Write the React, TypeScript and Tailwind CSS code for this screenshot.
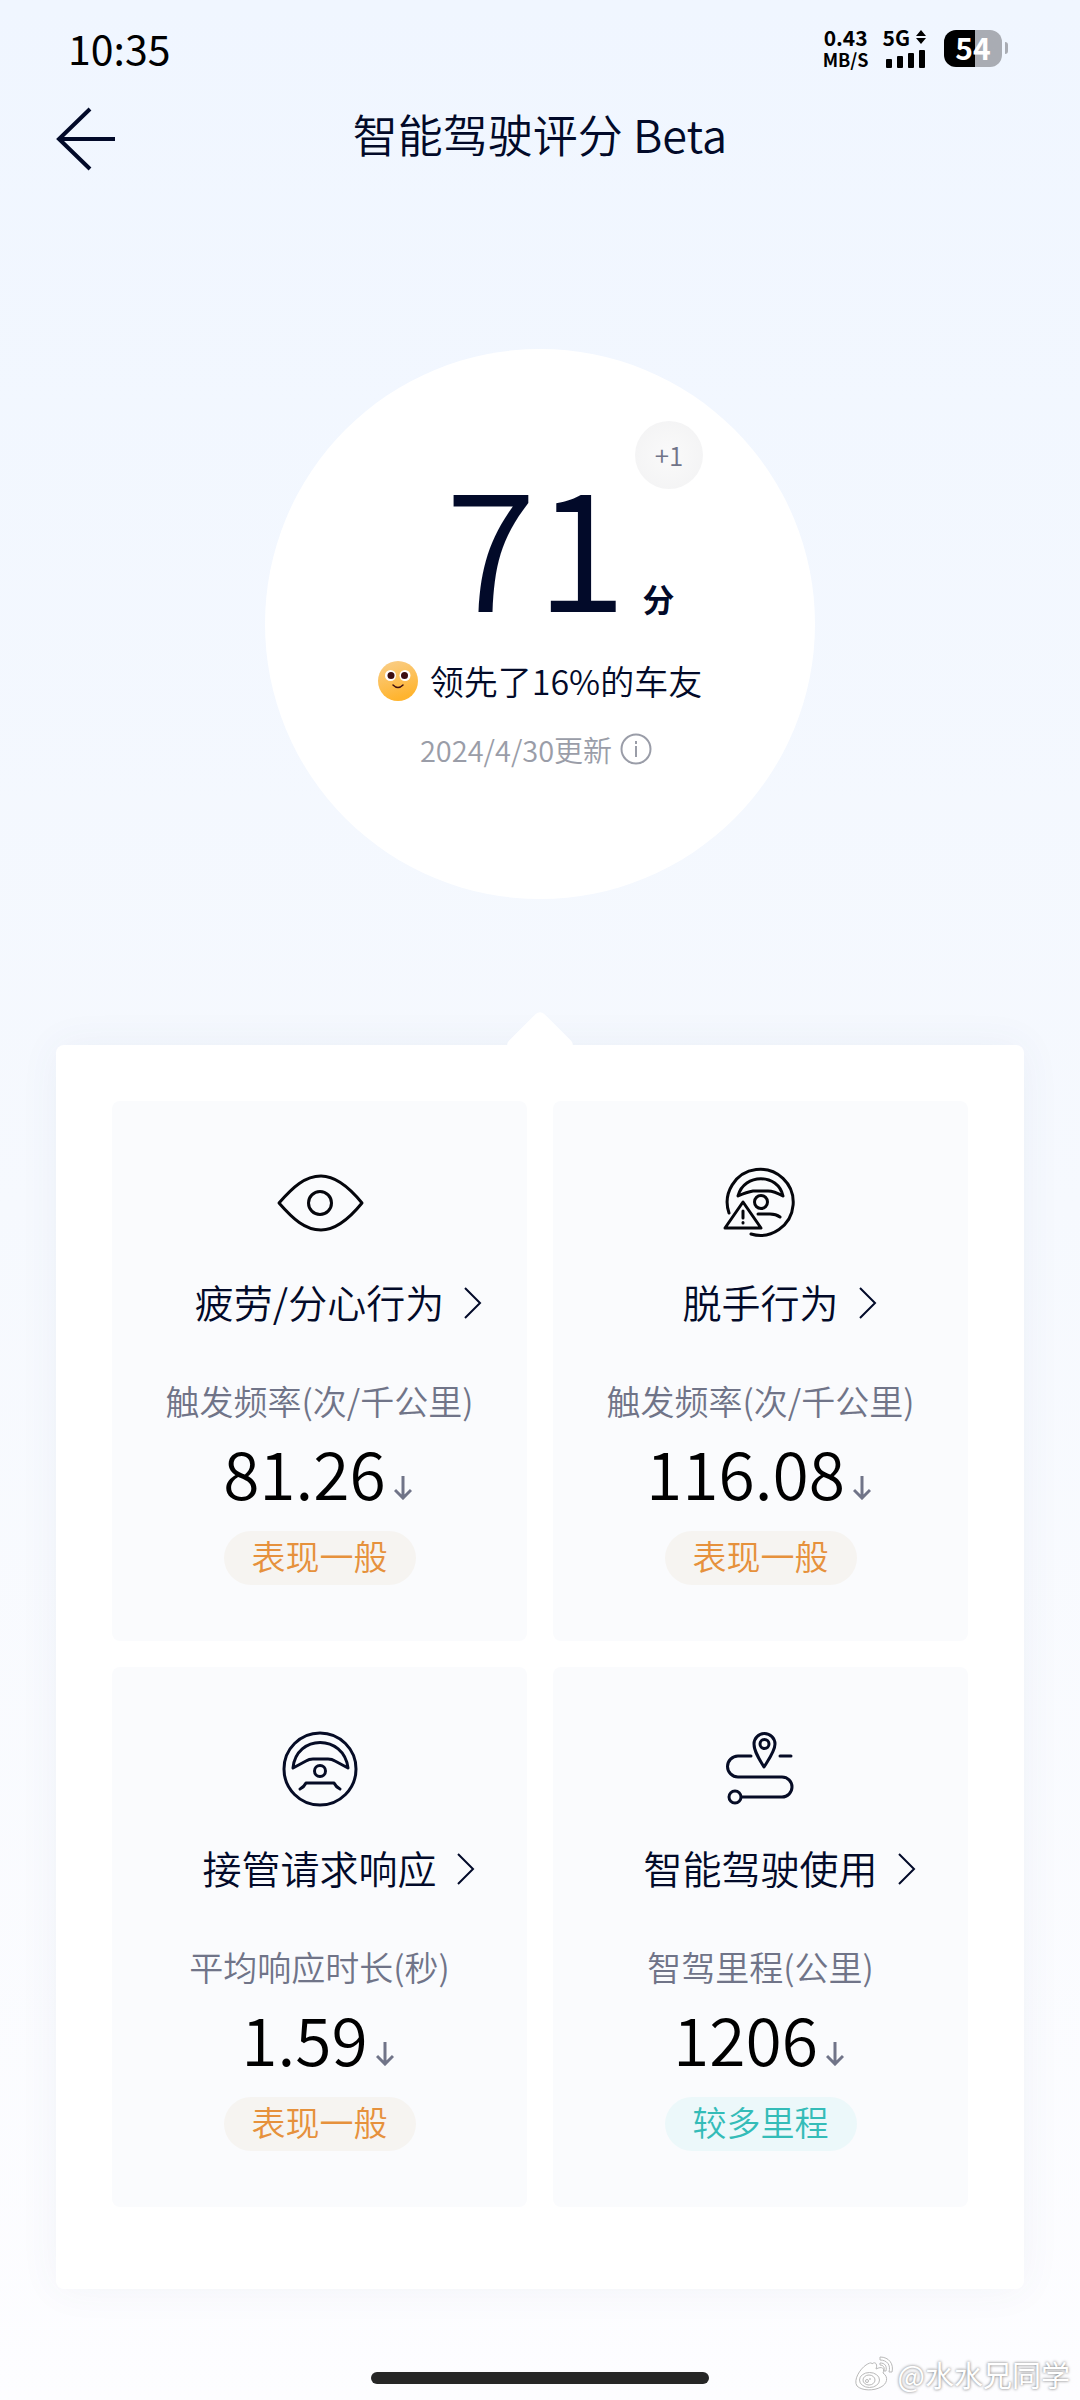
import type { ReactNode } from 'react'

type Metric = {
    title: string
    label: string
    value: string
    badge: string
    good?: boolean
    icon: ReactNode
}

function EyeIcon() {
    return (
        <svg width="88" height="76" viewBox="0 0 88 76" fill="none" stroke="#05060c" strokeWidth="3" strokeLinejoin="round">
            <path d="M3 38 C17 22 29 11 45 11 C60 11 73 22 86 38 C73 54 60 65 45 65 C29 65 17 54 3 38 Z" />
            <circle cx="44" cy="38" r="11.5" />
        </svg>
    )
}

function HandsOffIcon() {
    return (
        <svg width="76" height="76" viewBox="0 0 76 76" fill="none" stroke="#05060c" strokeWidth="3" strokeLinecap="round" strokeLinejoin="round">
            <path d="M6 48 A33 33 0 1 1 28 69" />
            <path d="M15 31 C21 8 55 8 60 31 Q51 26 45 26 H30 Q24 27 15 31 Z" />
            <circle cx="38" cy="37" r="6.5" />
            <path d="M35 49 H47 Q53 49 57 52" />
            <path d="M20 37 L38 63 H2 Z" />
            <path d="M20 46 V53 M20 57.5 V58" />
        </svg>
    )
}

function WheelIcon() {
    return (
        <svg width="76" height="76" viewBox="0 0 76 76" fill="none" stroke="#060c26" strokeWidth="3" strokeLinecap="round" strokeLinejoin="round">
            <circle cx="38" cy="38" r="36" />
            <path d="M11 37 C14 3 62 3 66 37 L53 30 Q50 28 46 28 H31 Q27 28 24 30 Z" />
            <circle cx="38" cy="40" r="5.5" />
            <path d="M18 58 Q22 56 24 52 H52 Q54 56 58 58" />
        </svg>
    )
}

function RouteIcon() {
    return (
        <svg width="76" height="76" viewBox="0 0 76 76" fill="none" stroke="#060c26" strokeWidth="3" strokeLinecap="round" strokeLinejoin="round">
            <path d="M28 25 H15 A10.5 10.5 0 0 0 15 46 H59 A10 10 0 0 1 59 66 H19" />
            <path d="M57 25 H68" />
            <path d="M41 36 C36 28 31 20 31 13 A10.5 10.5 0 0 1 52 13 C52 20 46 28 41 36 Z" />
            <circle cx="41.5" cy="13" r="4.5" />
            <circle cx="12" cy="66" r="6" />
        </svg>
    )
}

function SmileIcon() {
    return (
        <svg width="40" height="40" viewBox="0 0 40 40">
            <defs>
                <linearGradient id="face" x1="0" y1="0" x2="0.3" y2="1">
                    <stop offset="0" stopColor="#f9cf8c" />
                    <stop offset="1" stopColor="#ffb42e" />
                </linearGradient>
            </defs>
            <circle cx="20" cy="20" r="20" fill="url(#face)" />
            <circle cx="12.5" cy="14.5" r="5.5" fill="#fff" />
            <circle cx="27" cy="14.5" r="5.5" fill="#fff" />
            <circle cx="13" cy="14.5" r="3.5" fill="#3d0d10" />
            <circle cx="26.5" cy="14.5" r="3.5" fill="#3d0d10" />
            <path d="M15 24 Q20 29 25 24" fill="none" stroke="#3d0d10" strokeWidth="1.5" strokeLinecap="round" />
        </svg>
    )
}

function WeiboIcon() {
    return (
        <svg width="40" height="36" viewBox="0 0 40 36" fill="#fff" stroke="#b9b9b9" strokeWidth="1">
            <path d="M18 8 C21 5 24 8 22 13 C28 10 31 12 29 17 C35 21 33 28 27 31 C20 35 8 35 3 30 C-1 24 6 13 12 9 C15 7 18 6 18 8 Z" />
            <ellipse cx="15.5" cy="24" rx="10" ry="7.5" />
            <ellipse cx="15" cy="24" rx="6" ry="5" />
            <circle cx="13" cy="25" r="1.5" />
            <circle cx="16" cy="23" r="0.5" />
            <path d="M26 7 C31 7 33 10 32 15 L30 15 C31 11 29 9 26 9 Z" />
            <path d="M26 1 C35 1 40 8 38 16 L35 16 C37 9 33 4 26 4 Z" />
        </svg>
    )
}

const metrics: Metric[] = [
    { title: '疲劳/分心行为', label: '触发频率(次/千公里)', value: '81.26', badge: '表现一般', icon: <EyeIcon /> },
    { title: '脱手行为', label: '触发频率(次/千公里)', value: '116.08', badge: '表现一般', icon: <HandsOffIcon /> },
    { title: '接管请求响应', label: '平均响应时长(秒)', value: '1.59', badge: '表现一般', icon: <WheelIcon /> },
    { title: '智能驾驶使用', label: '智驾里程(公里)', value: '1206', badge: '较多里程', good: true, icon: <RouteIcon /> },
]

function StatusBar() {
    return (
        <div className="flex h-24 items-center justify-between pl-[68px] pr-[72px] text-black">
            <span className="pb-0.5 text-[41px] leading-[48px] font-normal">10:35</span>
            <div className="flex items-center gap-3.5">
                <div className="text-center font-bold">
                    <div className="text-[21px] leading-[22px]">0.43</div>
                    <div className="text-[18px] leading-[22px]">MB/S</div>
                </div>
                <div className="mr-1 flex flex-col gap-1">
                    <div className="flex items-center gap-1.5 text-[21px] leading-[18px] font-bold">
                        5G
                        <svg width="10" height="14" viewBox="0 0 10 14">
                            <path d="M5 0 L10 6 H0 Z M0 8 H10 L5 14 Z" />
                        </svg>
                    </div>
                    <svg width="42" height="18" viewBox="0 0 42 18">
                        <rect x="3" y="9" width="6" height="9" rx="1" />
                        <rect x="14" y="6" width="6" height="12" rx="1" />
                        <rect x="25" y="3" width="6" height="15" rx="1" />
                        <rect x="36" y="0" width="6" height="18" rx="1" />
                    </svg>
                </div>
                <div className="flex items-center gap-[3px]">
                    <div className="flex h-[37px] w-[58px] items-center justify-center rounded-xl bg-linear-to-r from-black from-53% to-[#a9acb3] to-53% pb-0.5 text-[30px] leading-none font-bold text-white">
                        54
                    </div>
                    <div className="h-3 w-[3px] rounded-r bg-[#a9acb3]" />
                </div>
            </div>
        </div>
    )
}

function ScoreCircle() {
    return (
        <section className="relative mx-auto mt-[173px] flex size-[550px] flex-col items-center rounded-full bg-white">
            <span className="absolute top-[72px] right-28 flex size-[68px] items-center justify-center rounded-full bg-radial from-[#fafafa] to-[#f2f2f3] pb-0.5 text-[26px] text-[#707488]">
                +1
            </span>
            <div className="mt-[102px] flex items-baseline gap-4 pl-10">
                <span className="text-[165px] leading-[180px]">71</span>
                <span className="text-[32px] font-bold">分</span>
            </div>
            <div className="mt-[26px] flex items-center gap-3 text-[34px] leading-[48px]">
                <SmileIcon />
                领先了16%的车友
            </div>
            <div className="mt-5 flex items-center gap-2 pr-2 text-[29px] leading-[48px] text-[#9a9da8]">
                2024/4/30更新
                <button aria-label="说明">
                    <svg width="32" height="32" viewBox="0 0 32 32" fill="none" stroke="#9a9da8" strokeWidth="2">
                        <circle cx="16" cy="16" r="14.5" />
                        <path d="M16 13 V24 M16 8 V11" />
                    </svg>
                </button>
            </div>
        </section>
    )
}

function MetricCard({ title, label, value, badge, good, icon }: Metric) {
    return (
        <div className="flex flex-col items-center rounded-lg bg-[#fafbfd] pt-16 pb-14">
            {icon}
            <button className="mt-[34px] flex items-center gap-5 pl-[38px] text-[39px] leading-[52px]">
                {title}
                <svg className="mt-1" width="18" height="32" viewBox="0 0 18 32" fill="none" stroke="currentColor" strokeWidth="2">
                    <path d="M1 1 L16 16 L1 31" />
                </svg>
            </button>
            <div className="mt-[50px] text-[34px] leading-[48px] text-[#707488]">{label}</div>
            <div className="mt-2.5 flex items-baseline gap-2 pr-1 text-[66px] leading-[72px] text-black">
                {value}
                <svg width="18" height="24" viewBox="0 0 18 24" fill="none" stroke="#707488" strokeWidth="3">
                    <path d="M9 0 V22 M1 14 L9 22 L17 14" />
                </svg>
            </div>
            <span
                className={
                    good
                        ? 'mt-6 rounded-full bg-[#ecf8fa] px-7 pb-1 text-[34px] leading-[50px] text-[#34bcb8]'
                        : 'mt-6 rounded-full bg-[#f6f4f1] px-7 pb-1 text-[34px] leading-[50px] text-[#e6913c]'
                }
            >
                {badge}
            </span>
        </div>
    )
}

export default function App() {
    return (
        <div className="relative flex min-h-screen flex-col bg-linear-to-b from-[#f0f6ff] via-[#f6f9fe] to-[#fdfdff] font-['Noto_Sans_CJK_SC',sans-serif] font-[350] text-[#020a29]">
            <StatusBar />
            <header className="grid h-20 grid-cols-[1fr_auto_1fr] items-center px-14">
                <button aria-label="返回" className="mt-1.5 justify-self-start">
                    <svg width="60" height="64" viewBox="0 0 60 64" fill="none" stroke="currentColor" strokeWidth="4">
                        <path d="M34 2 L3 32 L34 62 M3 32 H59" />
                    </svg>
                </button>
                <h1 className="pb-1 text-[45px] leading-[64px]">智能驾驶评分 Beta</h1>
            </header>

            <ScoreCircle />

            <main className="relative mx-14 mt-[146px] rounded-lg bg-white px-14 pt-14 pb-[82px] shadow-[0_0_40px_rgba(60,80,140,0.06)]">
                <div className="absolute -top-[25px] left-1/2 size-[50px] -translate-x-1/2 rotate-45 rounded-md bg-white" />
                <div className="relative grid grid-cols-2 gap-6.5">
                    {metrics.map((m) => (
                        <MetricCard key={m.title} {...m} />
                    ))}
                </div>
            </main>

            <footer className="flex flex-1 items-end justify-center pb-4">
                <div className="h-3 w-[338px] rounded-full bg-[#262626]" />
            </footer>
            <div className="absolute right-2.5 bottom-1.5 flex items-center gap-1 text-[29px] leading-[40px] font-normal text-white [text-shadow:0_0_3px_#666]">
                <WeiboIcon />
                @水水兄同学
            </div>
        </div>
    )
}
